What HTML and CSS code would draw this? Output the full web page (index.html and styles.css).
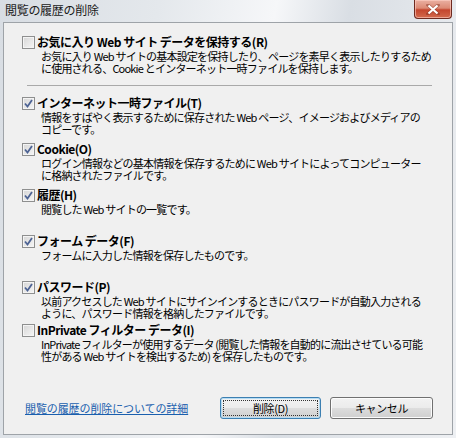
FILE: index.html
```html
<!DOCTYPE html>
<html lang="ja">
  <head>
    <meta charset="UTF-8" />
    <title>閲覧の履歴の削除</title>
    <link rel="stylesheet" href="styles.css">
  </head>
  <body>
    <div class="window">
      <div class="titlebar">
        <div class="title">閲覧の履歴の削除</div>
        <div class="close-btn">
          <svg width="14" height="11" viewBox="0 0 14 11">
            <path d="M2 1 L12 10 M12 1 L2 10" stroke="#7a2a1c" stroke-width="3.4" stroke-linecap="square" opacity="0.45" />
            <path d="M2.5 1.5 L11.5 9.5 M11.5 1.5 L2.5 9.5" stroke="#ffffff" stroke-width="2.2" />
          </svg>
        </div>
      </div>

      <div class="panel">
        <div class="item item-1">
          <div class="item-head">
            <span class="checkbox"></span>
            <span class="item-title">お気に入り Web サイト データを保持する(R)</span>
          </div>
          <div class="item-desc">お気に入り Web サイトの基本設定を保持したり、ページを素早く表示したりするため<br>に使用される、Cookie とインターネット一時ファイルを保持します。</div>
        </div>

        <div class="separator"></div>

        <div class="item item-2">
          <div class="item-head">
            <span class="checkbox checked"><svg width="9" height="9" viewBox="0 0 9 9"><path d="M1 4.5 L3.5 7.5 L8 1" fill="none" stroke="#4d6394" stroke-width="1.8" /></svg></span>
            <span class="item-title">インターネット一時ファイル(T)</span>
          </div>
          <div class="item-desc">情報をすばやく表示するために保存された Web ページ、イメージおよびメディアの<br>コピーです。</div>
        </div>

        <div class="item item-3">
          <div class="item-head">
            <span class="checkbox checked"><svg width="9" height="9" viewBox="0 0 9 9"><path d="M1 4.5 L3.5 7.5 L8 1" fill="none" stroke="#4d6394" stroke-width="1.8" /></svg></span>
            <span class="item-title">Cookie(O)</span>
          </div>
          <div class="item-desc">ログイン情報などの基本情報を保存するために Web サイトによってコンピューター<br>に格納されたファイルです。</div>
        </div>

        <div class="item item-4">
          <div class="item-head">
            <span class="checkbox checked"><svg width="9" height="9" viewBox="0 0 9 9"><path d="M1 4.5 L3.5 7.5 L8 1" fill="none" stroke="#4d6394" stroke-width="1.8" /></svg></span>
            <span class="item-title">履歴(H)</span>
          </div>
          <div class="item-desc">閲覧した Web サイトの一覧です。</div>
        </div>

        <div class="item item-5">
          <div class="item-head">
            <span class="checkbox checked"><svg width="9" height="9" viewBox="0 0 9 9"><path d="M1 4.5 L3.5 7.5 L8 1" fill="none" stroke="#4d6394" stroke-width="1.8" /></svg></span>
            <span class="item-title">フォーム データ(F)</span>
          </div>
          <div class="item-desc">フォームに入力した情報を保存したものです。</div>
        </div>

        <div class="item item-6">
          <div class="item-head">
            <span class="checkbox checked"><svg width="9" height="9" viewBox="0 0 9 9"><path d="M1 4.5 L3.5 7.5 L8 1" fill="none" stroke="#4d6394" stroke-width="1.8" /></svg></span>
            <span class="item-title">パスワード(P)</span>
          </div>
          <div class="item-desc">以前アクセスした Web サイトにサインインするときにパスワードが自動入力される<br>ように、パスワード情報を格納したファイルです。</div>
        </div>

        <div class="item item-7">
          <div class="item-head">
            <span class="checkbox"></span>
            <span class="item-title">InPrivate フィルター データ(I)</span>
          </div>
          <div class="item-desc">InPrivate フィルターが使用するデータ (閲覧した情報を自動的に流出させている可能<br>性がある Web サイトを検出するため) を保存したものです。</div>
        </div>

        <div class="footer">
          <a class="help-link" href="#">閲覧の履歴の削除についての詳細</a>
          <div class="buttons">
            <button class="btn btn-default"><span class="btn-focus">削除(D)</span></button>
            <button class="btn">キャンセル</button>
          </div>
        </div>
      </div>
    </div>
  </body>
</html>
```

FILE: styles.css
```css
html,
body {
  margin: 0;
  padding: 0;
}

body {
  width: 456px;
  height: 438px;
  overflow: hidden;
  font-family: "Noto Sans CJK JP", "Noto Sans", sans-serif;
  font-size: 12px;
  color: #000;
  background: linear-gradient(100deg, #d8dde3 0%, #e4e8ec 30%, #f6f7f9 52%, #d9dee4 66%, #e6e9ed 85%, #eef0f3 100%);
}

.window {
  width: 456px;
  height: 438px;
  display: flex;
  flex-direction: column;
}

.titlebar {
  height: 22px;
  display: flex;
  justify-content: space-between;
  align-items: flex-start;
}

.title {
  padding: 2px 0 0 5px;
  font-size: 12px;
  line-height: 16px;
  color: #1a1a1a;
  letter-spacing: -0.3px;
}

.close-btn {
  width: 36px;
  height: 18px;
  margin-right: 4px;
  border: 1px solid #6e2a20;
  border-top: none;
  border-radius: 0 0 4px 4px;
  background: linear-gradient(#eab0a2 0%, #dc8a75 45%, #c4462e 55%, #d36a4d 100%);
  box-shadow: inset 0 0 0 1px rgba(255, 210, 200, 0.6);
  display: flex;
  align-items: center;
  justify-content: center;
}

.panel {
  flex: 1;
  margin: 0 3px 3px 3px;
  border: 1px solid #9ea3a8;
  background-color: #f0f0f0;
  padding: 12px 19px 15px 18px;
  display: flex;
  flex-direction: column;
}

.item-head {
  display: flex;
  align-items: center;
  height: 14px;
}

.checkbox {
  width: 11px;
  height: 11px;
  border: 1px solid #8e8f8f;
  background: linear-gradient(135deg, #d6d6d6, #f6f6f6);
  box-shadow: inset 0 0 0 1px #f4f4f4;
  display: flex;
  align-items: center;
  justify-content: center;
  flex-shrink: 0;
}

.item-title {
  margin-left: 2px;
  font-weight: bold;
  font-size: 12px;
  line-height: 14px;
  letter-spacing: -0.5px;
}

.item-desc {
  margin-top: 1px;
  padding-left: 19px;
  font-size: 11px;
  line-height: 12px;
  letter-spacing: -0.8px;
  white-space: nowrap;
}

.separator {
  margin: 11px 1px 0 5px;
  border-top: 1px solid #a9a9a9;
}

.item-2 {
  margin-top: 10px;
}

.item-3,
.item-4 {
  margin-top: 7px;
}

.item-5,
.item-6 {
  margin-top: 19px;
}

.item-7 {
  margin-top: 4px;
}

.footer {
  margin-top: auto;
  display: flex;
  justify-content: space-between;
  align-items: center;
}

.help-link {
  margin-left: 3px;
  color: #1a5fae;
  font-size: 11px;
  letter-spacing: -0.1px;
  text-decoration: underline;
}

.buttons {
  display: flex;
  gap: 9px;
}

.btn {
  width: 101px;
  height: 22px;
  padding: 0;
  border: 1px solid #707070;
  border-radius: 3px;
  background: linear-gradient(#f2f2f2 0%, #ebebeb 50%, #dddddd 51%, #cfcfcf 100%);
  box-shadow: inset 0 0 0 1px #fcfcfc;
  font-family: "Noto Sans CJK JP", "Noto Sans", sans-serif;
  font-size: 11px;
  color: #000;
  letter-spacing: -0.4px;
}

.btn + .btn {
  width: 103px;
}

.btn-default {
  border-color: #3c7fb1;
  box-shadow: inset 0 0 0 1px #b5dcf4;
  padding: 2px;
}

.btn-focus {
  display: flex;
  align-items: center;
  justify-content: center;
  height: 100%;
  box-sizing: border-box;
  border: 1px dotted #333;
}
```
